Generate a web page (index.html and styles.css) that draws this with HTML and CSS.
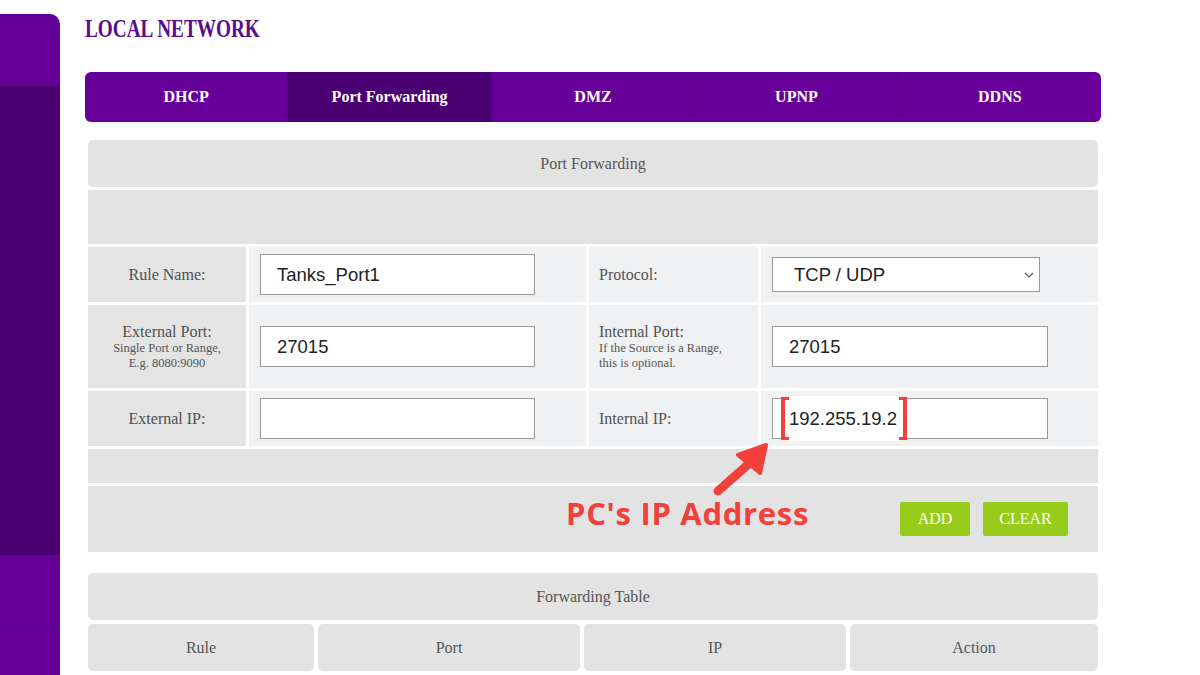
FILE: index.html
```html
<!DOCTYPE html>
<html lang="en">
<head>
  <meta charset="UTF-8">
  <title>Local Network - Port Forwarding</title>
  <link rel="stylesheet" href="styles.css">
</head>
<body>
  <div class="sidebar">
    <div class="side-item"></div>
    <div class="side-item active"></div>
    <div class="side-item linha"></div>
    <div class="side-item"></div>
  </div>

  <div class="main">
    <h1 class="titulo">LOCAL NETWORK</h1>

    <div class="tabs">
      <div class="tab">DHCP</div>
      <div class="tab ativo">Port Forwarding</div>
      <div class="tab">DMZ</div>
      <div class="tab">UPNP</div>
      <div class="tab">DDNS</div>
    </div>

    <div class="painel">
      <div class="cabecalho">Port Forwarding</div>
      <div class="vazio alto"></div>

      <div class="form">
        <div class="rotulo">Rule Name:</div>
        <div class="campo"><input type="text" value="Tanks_Port1"></div>
        <div class="rotulo dir">Protocol:</div>
        <div class="campo">
          <div class="select">TCP / UDP
            <svg class="seta" width="10" height="6" viewBox="0 0 10 6"><path d="M1 1l4 4 4-4" fill="none" stroke="#555" stroke-width="1.2"/></svg>
          </div>
        </div>

        <div class="rotulo">External Port:<small>Single Port or Range,<br>E.g. 8080:9090</small></div>
        <div class="campo"><input type="text" value="27015"></div>
        <div class="rotulo dir">Internal Port:<small>If the Source is a Range,<br>this is optional.</small></div>
        <div class="campo"><input type="text" class="largo" value="27015"></div>

        <div class="rotulo">External IP:</div>
        <div class="campo"><input type="text" value=""></div>
        <div class="rotulo dir">Internal IP:</div>
        <div class="campo"><input type="text" class="largo" value="192.255.19.2"></div>
      </div>

      <div class="vazio baixo"></div>
      <div class="acoes">
        <button class="btn add">ADD</button>
        <button class="btn clear">CLEAR</button>
      </div>

      <!-- anotacao em cima da tela -->
      <div class="colchete"></div>
      <svg class="flecha" width="70" height="60" viewBox="0 0 70 60">
        <path d="M10 50 L44 20" stroke="#f2403a" stroke-width="9" stroke-linecap="round"/>
        <path d="M30 14 L58 4 L52 32 Z" fill="#f2403a" stroke="#f2403a" stroke-width="4" stroke-linejoin="round"/>
      </svg>
      <div class="nota">PC's IP Address</div>
    </div>

    <div class="tabela">
      <div class="cabecalho">Forwarding Table</div>
      <div class="colunas">
        <div class="col">Rule</div>
        <div class="col">Port</div>
        <div class="col">IP</div>
        <div class="col">Action</div>
      </div>
      <div class="linhas">
        <div></div><div></div><div></div><div></div><div></div><div></div><div></div><div></div>
      </div>
    </div>
  </div>
</body>
</html>
```

FILE: styles.css
```css
body {
  margin: 0;
  background-color: #fff;
  font-family: "Liberation Serif", serif;
  display: flex;
  overflow: hidden;
  height: 675px;
}
.sidebar {
  width: 60px;
  margin-top: 14px;
  border-top-right-radius: 10px;
  overflow: hidden;
  display: flex;
  flex-direction: column;
  flex-shrink: 0;
}
.side-item {
  height: 72px;
  flex-shrink: 0;
  background-color: #650099;
}
.side-item.active {
  height: 469px;
  background-color: #4a0070;
}
.side-item.linha {
  border-bottom: 1px solid #55007f;
}
.main {
  padding-left: 25px;
  width: 1016px;
}
.titulo {
  margin: 14px 0 0;
  font-size: 26px;
  color: #5a0c8c;
  height: 40px;
  white-space: nowrap;
  transform: scaleX(0.74);
  transform-origin: left;
}
.tabs {
  margin-top: 18px;
  display: flex;
  height: 50px;
  background-color: #660099;
  border-radius: 6px;
  overflow: hidden;
}
.tab {
  flex: 1;
  color: #fff;
  font-weight: bold;
  font-size: 16px;
  display: flex;
  align-items: center;
  justify-content: center;
  border-left: 1px solid #58008a;
}
.tab:first-child {
  border-left: none;
}
.tab.ativo {
  background-color: #4b0072;
}
.painel {
  position: relative;
  margin: 18px 0 0 3px;
  width: 1010px;
  display: flex;
  flex-direction: column;
  gap: 3px;
}
.cabecalho {
  height: 47px;
  background-color: #e3e3e4;
  border-radius: 5px;
  display: flex;
  align-items: center;
  justify-content: center;
  color: #555;
  font-size: 16px;
}
.vazio {
  background-color: #e3e3e4;
}
.vazio.alto {
  height: 54px;
}
.vazio.baixo {
  height: 34px;
}
.form {
  display: grid;
  grid-template-columns: 158px 337px 169px 337px;
  grid-template-rows: 55px 83px 55px;
  gap: 3px;
}
.rotulo {
  background-color: #e4e4e4;
  color: #505050;
  font-size: 16px;
  display: flex;
  flex-direction: column;
  align-items: center;
  justify-content: center;
  text-align: center;
}
.rotulo small {
  font-size: 12.5px;
  line-height: 15px;
  color: #555;
}
.rotulo.dir {
  background-color: #f0f1f3;
  align-items: flex-start;
  text-align: left;
  padding-left: 10px;
}
.campo {
  background-color: #f0f1f3;
  display: flex;
  align-items: center;
  padding-left: 11px;
}
input {
  width: 275px;
  height: 41px;
  box-sizing: border-box;
  border: 1px solid #999;
  padding-left: 16px;
  font-family: "Liberation Sans", Arial, sans-serif;
  font-size: 18.5px;
  color: #222;
  background-color: #fff;
}
input.largo {
  width: 276px;
}
.select {
  width: 268px;
  height: 35px;
  box-sizing: border-box;
  border: 1px solid #999;
  background-color: #fff;
  font-family: "Liberation Sans", Arial, sans-serif;
  font-size: 18.5px;
  color: #222;
  padding-left: 21px;
  display: flex;
  align-items: center;
  position: relative;
}
.seta {
  position: absolute;
  right: 5px;
  top: 14px;
}
.acoes {
  height: 66px;
  background-color: #e3e3e4;
  display: flex;
  align-items: center;
  justify-content: flex-end;
  gap: 13px;
  padding-right: 30px;
}
.btn {
  height: 34px;
  border: none;
  border-radius: 2px;
  background-color: #98cc1c;
  color: #fff;
  font-family: "Liberation Serif", serif;
  font-size: 16px;
  padding: 0;
}
.btn.add {
  width: 70px;
}
.btn.clear {
  width: 85px;
}
.colchete {
  position: absolute;
  left: 693px;
  top: 257px;
  width: 118px;
  height: 37px;
  border: 4px solid #f2403a;
  border-top-width: 3px;
  border-bottom-width: 3px;
}
.colchete::before {
  content: "";
  position: absolute;
  left: 4px;
  right: 4px;
  top: -4px;
  bottom: -4px;
  border-top: 4px solid #fff;
  border-bottom: 4px solid #fff;
}
.flecha {
  position: absolute;
  left: 620px;
  top: 301px;
}
.nota {
  position: absolute;
  left: 478px;
  top: 352px;
  color: #f2403a;
  font-family: "Open Sans", sans-serif;
  font-weight: bold;
  font-size: 31px;
  letter-spacing: 0.7px;
}
.tabela {
  margin: 21px 0 0 3px;
  width: 1010px;
  display: flex;
  flex-direction: column;
  gap: 4px;
}
.colunas {
  display: grid;
  grid-template-columns: 226px 262px 262px 248px;
  gap: 4px;
}
.col {
  height: 47px;
  background-color: #e3e3e4;
  border-radius: 5px;
  display: flex;
  align-items: center;
  justify-content: center;
  color: #555;
  font-size: 16px;
}
.linhas {
  display: grid;
  grid-template-columns: 65px 157px 131px 127px 131px 127px 248px;
  gap: 4px;
}
.linhas div {
  height: 20px;
  background-color: #e3e3e4;
}
```
